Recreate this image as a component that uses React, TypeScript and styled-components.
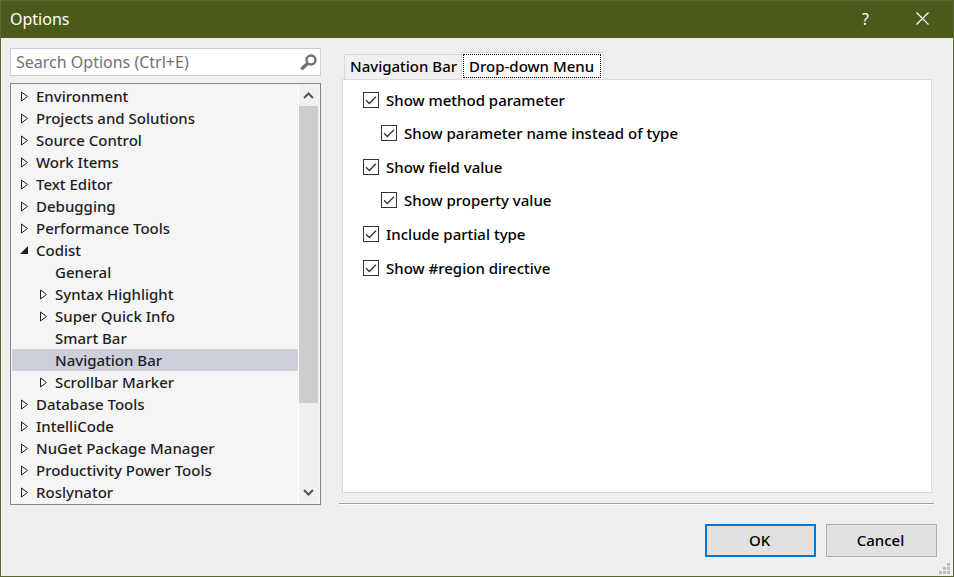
import React, { useState } from "react";
import styled, { createGlobalStyle } from "styled-components";

const GlobalStyle = createGlobalStyle`
  *, *::before, *::after { box-sizing: border-box; }
  body { margin: 0; background: #efefef; }
  body, button, input {
    font-family: "Noto Sans", "Open Sans", sans-serif;
    font-size: 15px;
    line-height: 22px;
  }
`;

const Dialog = styled.div`
  min-height: 100vh;
  display: flex;
  flex-direction: column;
  border: 1px solid #5a682f;
  background: #efefef;
  color: #000;
`;

const TitleBar = styled.header`
  height: 37px;
  display: flex;
  align-items: center;
  padding: 0 2px 2px 9px;
  background: #4a5a1a;
  color: #fff;
`;

const Title = styled.h1`
  flex: 1;
  margin: 0;
  font-size: 16px;
  font-weight: 400;
`;

const CaptionButton = styled.button`
  width: 57px;
  height: 35px;
  display: grid;
  place-items: center;
  padding: 0;
  border: 0;
  background: transparent;
  color: #fff;
  font-size: 16px;
`;

const Content = styled.main`
  flex: 1;
  display: flex;
  gap: 18px;
  padding: 10px 19px 0 9px;
`;

const Sidebar = styled.div`
  width: 311px;
  flex: none;
  display: flex;
  flex-direction: column;
  gap: 7px;
`;

const SearchBox = styled.label`
  height: 28px;
  display: flex;
  align-items: center;
  padding: 0 3px 0 5px;
  border: 1px solid #cccedb;
  background: #fff;
`;

const SearchInput = styled.input`
  flex: 1;
  min-width: 0;
  padding: 0;
  border: 0;
  outline: 0;
  background: transparent;
  font-size: 16px;
  &::placeholder { color: #717171; opacity: 1; }
`;

const TreeFrame = styled.div`
  display: flex;
  padding: 1px;
  border: 1px solid #828790;
  background: #f5f5f5;
`;

const Tree = styled.ul`
  flex: 1;
  margin: 0;
  padding: 0;
  list-style: none;
`;

const TreeRow = styled.button<{ $level: number; $selected: boolean }>`
  width: 100%;
  height: 22px;
  display: flex;
  align-items: center;
  gap: 6px;
  padding: 0 0 0 ${(p) => (p.$level ? 26 : 7)}px;
  border: 0;
  background: ${(p) => (p.$selected ? "#cccedb" : "transparent")};
  color: #1e1e1e;
  font-weight: 500;
  text-align: left;
  white-space: nowrap;
`;

const Arrow = styled.svg`
  width: 11px;
  height: 11px;
  flex: none;
`;

const ScrollBar = styled.div`
  width: 21px;
  display: flex;
  flex-direction: column;
  padding-right: 1px;
  border-left: 1px solid #fff;
  background: #f0f0f0;
`;

const ScrollButton = styled.button`
  height: 21px;
  display: grid;
  place-items: center;
  padding: 0;
  border: 0;
  background: transparent;
`;

const ScrollTrack = styled.div`
  flex: 1;
`;

const ScrollThumb = styled.div`
  height: 79%;
  background: #cdcdcd;
`;

const Page = styled.section`
  flex: 1;
  min-width: 0;
  display: flex;
  flex-direction: column;
  padding-top: 4px;
  border-bottom: 1px solid #fff;
`;

const PageInner = styled.div`
  flex: 1;
  display: flex;
  flex-direction: column;
  padding: 0 2px 10px 3px;
  border-bottom: 1px solid #a0a0a0;
`;

const Tabs = styled.div`
  display: flex;
  align-items: flex-end;
  padding-left: 2px;
`;

const Tab = styled.button<{ $active: boolean }>`
  height: ${(p) => (p.$active ? 28 : 25)}px;
  margin-bottom: ${(p) => (p.$active ? -1 : 0)}px;
  padding: ${(p) => (p.$active ? "0 2px 1px 1px" : "0 4px 0 5px")};
  border: 1px solid #d9d9d9;
  border-bottom: 0;
  ${(p) => (p.$active ? "" : "border-right: 0;")}
  background: ${(p) => (p.$active ? "#fff" : "#f0f0f0")};
  font-weight: 500;
  white-space: nowrap;
`;

const TabLabel = styled.span<{ $active: boolean }>`
  display: block;
  height: 24px;
  padding: ${(p) => (p.$active ? "0 6px 0 5px" : "0")};
  border: ${(p) => (p.$active ? "1px dotted #000" : "0")};
`;

const Panel = styled.div`
  flex: 1;
  padding: 3px 20px;
  border: 1px solid #dcdcdc;
  background: #fff;
`;

const OptionList = styled.div`
  display: flex;
  flex-direction: column;
  gap: 1px;
`;

const OptionGroup = styled.div`
  display: flex;
  flex-direction: column;
`;

const Option = styled.label<{ $nested?: boolean }>`
  height: 33px;
  display: flex;
  align-items: center;
  gap: 7px;
  padding-left: ${(p) => (p.$nested ? 18 : 0)}px;
  font-weight: 500;
`;

const CheckCell = styled.span`
  display: grid;
  width: 16px;
  height: 16px;
  & > * { grid-area: 1 / 1; }
`;

const CheckInput = styled.input`
  appearance: none;
  width: 16px;
  height: 16px;
  margin: 0;
  border: 1px solid #333;
  background: #fff;
  & + svg { pointer-events: none; visibility: hidden; }
  &:checked + svg { visibility: visible; }
`;

const Footer = styled.footer`
  display: flex;
  justify-content: flex-end;
  gap: 10px;
  padding: 19px 16px 0;
`;

const FooterButton = styled.button<{ $primary?: boolean }>`
  width: 111px;
  height: 33px;
  padding: 0 2px 2px 0;
  border: ${(p) => (p.$primary ? "2px solid #0078d7" : "1px solid #adadad")};
  background: #e1e1e1;
  color: #000;
  font-weight: 500;
`;

const GripRow = styled.div`
  height: 19px;
  display: flex;
  align-items: flex-end;
  justify-content: flex-end;
  padding: 0 3px 2px;
`;

const Grip = styled.svg`
  display: block;
`;

type Node = { name: string; level?: number; state?: "open" | "leaf" };

const nodes: Node[] = [
  { name: "Environment" },
  { name: "Projects and Solutions" },
  { name: "Source Control" },
  { name: "Work Items" },
  { name: "Text Editor" },
  { name: "Debugging" },
  { name: "Performance Tools" },
  { name: "Codist", state: "open" },
  { name: "General", level: 1, state: "leaf" },
  { name: "Syntax Highlight", level: 1 },
  { name: "Super Quick Info", level: 1 },
  { name: "Smart Bar", level: 1, state: "leaf" },
  { name: "Navigation Bar", level: 1, state: "leaf" },
  { name: "Scrollbar Marker", level: 1 },
  { name: "Database Tools" },
  { name: "IntelliCode" },
  { name: "NuGet Package Manager" },
  { name: "Productivity Power Tools" },
  { name: "Roslynator" },
];

const optionGroups = [
  ["Show method parameter", "Show parameter name instead of type"],
  ["Show field value", "Show property value"],
  ["Include partial type"],
  ["Show #region directive"],
];

const tabNames = ["Navigation Bar", "Drop-down Menu"];

function NodeArrow({ state }: { state?: Node["state"] }) {
  return (
    <Arrow viewBox="0 0 11 11" aria-hidden="true">
      {state === "open" && <path d="M9 1V9H1Z" fill="#1e1e1e" />}
      {!state && <path d="M2.5 1v9L8.5 5.5Z" fill="none" stroke="#1e1e1e" />}
    </Arrow>
  );
}

function Chevron({ up }: { up?: boolean }) {
  return (
    <svg width="11" height="8" viewBox="0 0 11 8" aria-hidden="true">
      <path d={up ? "M1 6 5.5 1.5 10 6" : "M1 1 5.5 5.5 10 1"} fill="none" stroke="#555" strokeWidth="2" />
    </svg>
  );
}

function CheckOption({ label, nested }: { label: string; nested?: boolean }) {
  return (
    <Option $nested={nested}>
      <CheckCell>
        <CheckInput type="checkbox" defaultChecked />
        <svg width="16" height="16" viewBox="0 0 16 16" aria-hidden="true">
          <path d="M3 8.2 6.3 11.5 13 4.8" fill="none" stroke="#333" strokeWidth="1.3" />
        </svg>
      </CheckCell>
      {label}
    </Option>
  );
}

export default function App() {
  const [selected, setSelected] = useState("Navigation Bar");
  const [tab, setTab] = useState("Drop-down Menu");

  return (
    <Dialog role="dialog" aria-label="Options">
      <GlobalStyle />
      <TitleBar>
        <Title>Options</Title>
        <CaptionButton aria-label="Help">?</CaptionButton>
        <CaptionButton aria-label="Close">
          <svg width="13" height="13" viewBox="0 0 13 13" aria-hidden="true">
            <path d="M.5.5l12 12M12.5.5l-12 12" stroke="#fff" strokeWidth="1.2" />
          </svg>
        </CaptionButton>
      </TitleBar>
      <Content>
        <Sidebar>
          <SearchBox>
            <SearchInput type="text" placeholder="Search Options (Ctrl+E)" aria-label="Search Options" />
            <svg width="17" height="17" viewBox="0 0 17 17" aria-hidden="true">
              <circle cx="11" cy="6" r="4.5" fill="none" stroke="#717171" strokeWidth="2.4" />
              <path d="M7.8 9.2 1.3 15.2" stroke="#717171" strokeWidth="3.4" />
            </svg>
          </SearchBox>
          <TreeFrame>
            <Tree role="tree" aria-label="Option pages">
              {nodes.map((n) => (
                <li key={n.name} role="none">
                  <TreeRow
                    role="treeitem"
                    aria-selected={selected === n.name}
                    $level={n.level ?? 0}
                    $selected={selected === n.name}
                    onClick={() => setSelected(n.name)}
                  >
                    <NodeArrow state={n.state} />
                    {n.name}
                  </TreeRow>
                </li>
              ))}
            </Tree>
            <ScrollBar>
              <ScrollButton aria-label="Scroll up"><Chevron up /></ScrollButton>
              <ScrollTrack><ScrollThumb /></ScrollTrack>
              <ScrollButton aria-label="Scroll down"><Chevron /></ScrollButton>
            </ScrollBar>
          </TreeFrame>
        </Sidebar>
        <Page>
          <PageInner>
            <Tabs role="tablist">
              {tabNames.map((t) => (
                <Tab key={t} role="tab" aria-selected={tab === t} $active={tab === t} onClick={() => setTab(t)}>
                  <TabLabel $active={tab === t}>{t}</TabLabel>
                </Tab>
              ))}
            </Tabs>
            <Panel role="tabpanel">
              <OptionList>
                {optionGroups.map(([main, sub]) => (
                  <OptionGroup key={main}>
                    <CheckOption label={main} />
                    {sub && <CheckOption label={sub} nested />}
                  </OptionGroup>
                ))}
              </OptionList>
            </Panel>
          </PageInner>
        </Page>
      </Content>
      <Footer>
        <FooterButton $primary>OK</FooterButton>
        <FooterButton>Cancel</FooterButton>
      </Footer>
      <GripRow>
        <Grip width="11" height="11" viewBox="0 0 11 11" fill="#bcbcbc" aria-hidden="true">
          <path d="M8 0h3v3H8zM4 4h3v3H4zM8 4h3v3H8zM0 8h3v3H0zM4 8h3v3H4zM8 8h3v3H8z" />
        </Grip>
      </GripRow>
    </Dialog>
  );
}
